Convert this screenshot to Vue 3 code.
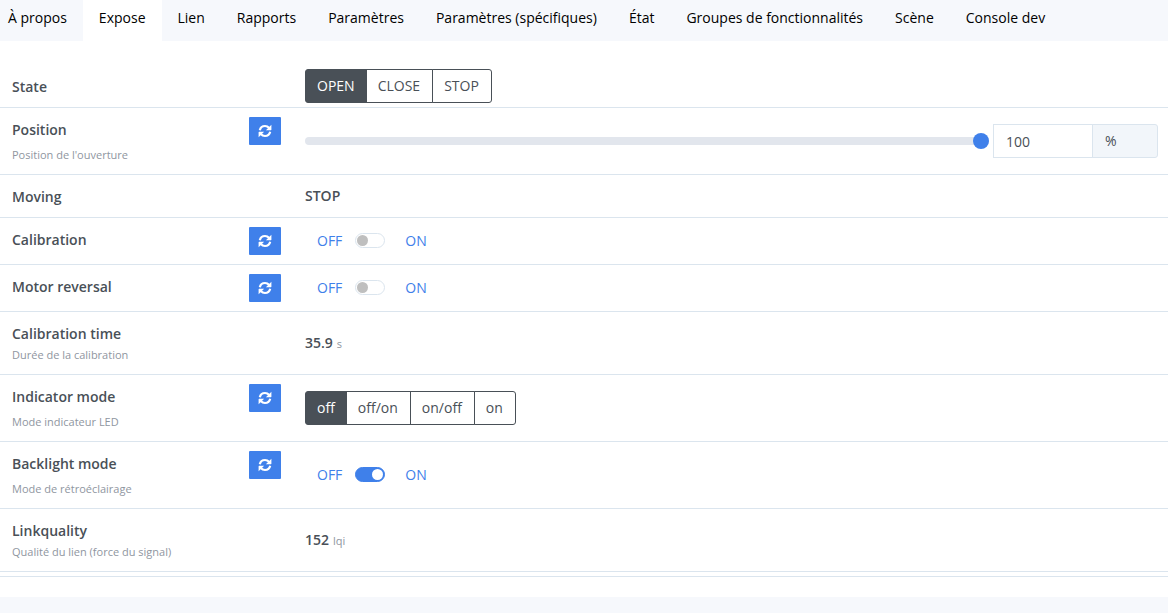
<script setup>
import { ref } from 'vue'

const tabs = [
  'À propos', 'Expose', 'Lien', 'Rapports', 'Paramètres', 'Paramètres (spécifiques)',
  'État', 'Groupes de fonctionnalités', 'Scène', 'Console dev',
]
const activeTab = ref('Expose')

const rows = ref([
  { id: 'state', label: 'State', type: 'choice', options: ['OPEN', 'CLOSE', 'STOP'], value: 'OPEN' },
  { id: 'position', label: 'Position', note: "Position de l'ouverture", refresh: true, type: 'range', value: 100, unit: '%' },
  { id: 'moving', label: 'Moving', type: 'text', value: 'STOP' },
  { id: 'calibration', label: 'Calibration', refresh: true, type: 'toggle', value: false },
  { id: 'motor', label: 'Motor reversal', refresh: true, type: 'toggle', value: false },
  { id: 'time', label: 'Calibration time', note: 'Durée de la calibration', type: 'text', value: '35.9', unit: 's' },
  { id: 'indicator', label: 'Indicator mode', note: 'Mode indicateur LED', refresh: true, type: 'choice', options: ['off', 'off/on', 'on/off', 'on'], value: 'off' },
  { id: 'backlight', label: 'Backlight mode', note: 'Mode de rétroéclairage', refresh: true, type: 'toggle', value: true },
  { id: 'link', label: 'Linkquality', note: 'Qualité du lien (force du signal)', type: 'text', value: '152', unit: 'lqi' },
])
</script>

<template>
  <div class="page">
    <nav class="tabs">
      <a
        v-for="tab in tabs"
        :key="tab"
        href="#"
        class="tab"
        :class="{ active: tab === activeTab }"
        @click.prevent="activeTab = tab"
      >{{ tab }}</a>
    </nav>

    <main class="card">
      <div class="list">
        <section v-for="row in rows" :key="row.id" class="row">
          <div class="info">
            <div class="head">
              <strong :id="row.id + '-label'" class="name">{{ row.label }}</strong>
              <button v-if="row.refresh" type="button" class="refresh" :aria-label="'Actualiser ' + row.label">
                <svg viewBox="0 0 14 14" width="14" height="14" aria-hidden="true">
                  <g fill="none" stroke="currentColor" stroke-width="2.2">
                    <path d="M1.800 6.200C2.400 3.600 4.500 2 7 2c1.700 0 3.100.7 4.200 1.900" />
                    <path d="M12.200 7.800c-.6 2.600-2.700 4.200-5.200 4.200-1.700 0-3.100-.7-4.200-1.900" />
                  </g>
                  <path fill="currentColor" d="M13.400.8v4.900c0 .3-.2.5-.5.5H7.900zM.6 13.200V8.300c0-.3.2-.5.5-.5h5z" />
                </svg>
              </button>
            </div>
            <small v-if="row.note" class="note">{{ row.note }}</small>
          </div>

          <div class="value">
            <div v-if="row.type === 'choice'" class="group" role="group" :aria-labelledby="row.id + '-label'">
              <button
                v-for="option in row.options"
                :key="option"
                type="button"
                class="option"
                :class="{ selected: option === row.value }"
                :aria-pressed="option === row.value"
                @click="row.value = option"
              >{{ option }}</button>
            </div>

            <div v-else-if="row.type === 'range'" class="slider">
              <input v-model="row.value" class="range" type="range" min="0" max="100" :aria-labelledby="row.id + '-label'">
              <input v-model="row.value" class="amount" type="text" inputmode="numeric" :aria-labelledby="row.id + '-label'">
              <span class="unit-box">{{ row.unit }}</span>
            </div>

            <div v-else-if="row.type === 'toggle'" class="toggle">
              <button type="button" class="link" @click="row.value = false">OFF</button>
              <input v-model="row.value" class="switch" type="checkbox" :aria-labelledby="row.id + '-label'">
              <button type="button" class="link" @click="row.value = true">ON</button>
            </div>

            <div v-else class="reading">
              <strong>{{ row.value }}</strong>
              <small v-if="row.unit" class="unit">{{ row.unit }}</small>
            </div>
          </div>
        </section>
      </div>
    </main>
  </div>
</template>

<style>
body {
  background: #f6f8fc;
}
</style>

<style scoped>
.page {
  color: #495057;
  font-family: "Segoe UI", "Open Sans", "Noto Sans", sans-serif;
  font-size: 14px;
  line-height: 24px;
}
.page * {
  box-sizing: border-box;
}
button,
input {
  margin: 0;
  font: inherit;
}
button {
  cursor: pointer;
}
.tabs {
  display: flex;
  white-space: nowrap;
  overflow: hidden;
}
.tab {
  padding: 6px 16px 11px;
  color: #000;
  text-decoration: none;
}
.tab:first-child {
  padding-left: 8px;
}
.tab.active {
  background: #fff;
}
.card {
  padding: 24px 0 20px;
  background: #fff;
  box-shadow: 0 1px 3px rgba(30, 40, 60, 0.12);
  clip-path: inset(0 0 -4px);
}
.list {
  padding-bottom: 4px;
  border-bottom: 1px solid #dbe5ee;
}
.row {
  display: grid;
  grid-template-columns: 293px minmax(0, 1fr);
  border-bottom: 1px solid #dbe5ee;
}
.info {
  padding: 9px 12px;
}
.head {
  display: flex;
  justify-content: space-between;
}
.name,
.reading strong {
  font-weight: 600;
}
.name {
  line-height: 26px;
  margin-bottom: -2px;
}
.refresh {
  display: flex;
  align-items: center;
  justify-content: center;
  width: 32px;
  height: 28px;
  padding: 0;
  border: 0;
  border-radius: 1px;
  color: #fff;
  background: #3f80ea;
}
.note {
  display: block;
  color: #8f969f;
  font-size: 11px;
  line-height: 20px;
}
.value {
  display: flex;
  align-items: center;
  padding: 4px 10px 4px 12px;
}
.group {
  display: flex;
}
.option {
  height: 34px;
  padding: 0 11px;
  border: 1px solid #495057;
  color: #495057;
  background: #fff;
}
.option + .option {
  margin-left: -1px;
  padding-right: 12px;
}
.option:first-child {
  border-radius: 3px 0 0 3px;
}
.option:last-child {
  border-radius: 0 3px 3px 0;
}
.option.selected {
  color: #fff;
  background: #495057;
}
.slider {
  display: flex;
  align-items: center;
  width: 100%;
}
.range {
  flex: 1;
  min-width: 0;
  height: 16px;
  margin-right: 4px;
  appearance: none;
  background: transparent;
}
.range::-webkit-slider-runnable-track {
  height: 8px;
  border-radius: 4px;
  background: #e2e6ed;
}
.range::-webkit-slider-thumb {
  width: 16px;
  height: 16px;
  margin-top: -4px;
  appearance: none;
  border-radius: 50%;
  background: #3f80ea;
}
.amount {
  width: 100px;
  height: 34px;
  padding: 0 12px;
  border: 1px solid #dbe5ee;
  color: #495057;
  background: #fff;
}
.unit-box {
  width: 66px;
  height: 34px;
  margin-left: -1px;
  padding: 4px 12px;
  border: 1px solid #dbe5ee;
  border-radius: 0 3px 3px 0;
  background: #f2f6fa;
}
.toggle {
  display: flex;
  align-items: center;
  padding-left: 12px;
}
.link {
  padding: 0;
  border: 0;
  color: #3f80ea;
  background: none;
}
.switch {
  width: 30px;
  height: 15px;
  margin: 0 20px 1px 13px;
  appearance: none;
  border: 1px solid #dbe5ee;
  border-radius: 8px;
  background: #fff;
}
.switch::before {
  display: block;
  width: 11px;
  height: 11px;
  margin: 1px;
  border-radius: 50%;
  background: #bfbfbf;
  content: "";
}
.switch:checked {
  border-color: #3f80ea;
  background: #3f80ea;
}
.switch:checked::before {
  margin-left: 16px;
  background: #fff;
}
.reading {
  display: flex;
  align-items: baseline;
  gap: 4px;
}
.unit {
  color: #8f969f;
  font-size: 11px;
}
</style>
